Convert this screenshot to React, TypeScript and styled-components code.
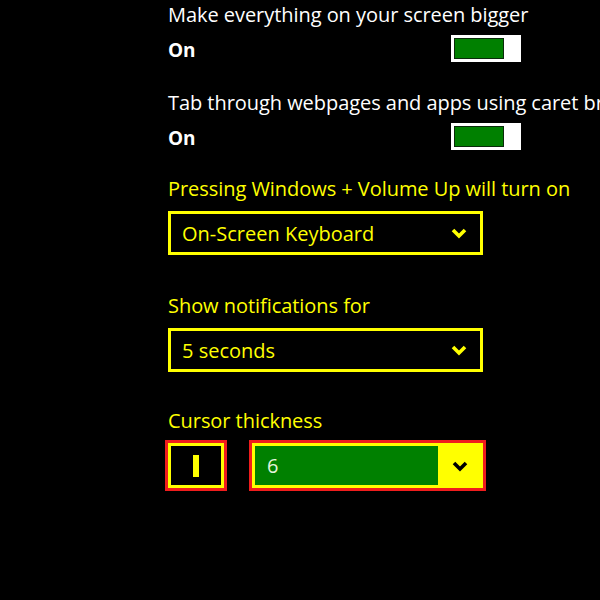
import { createGlobalStyle, styled } from "styled-components";

const GlobalStyle = createGlobalStyle`
    html, body {
        margin: 0;
        padding: 0;
        background: #000;
        overflow: hidden;
    }
    body {
        width: 600px;
        height: 600px;
        font-family: "Open Sans", "Noto Sans", sans-serif;
    }
`;

const Page = styled.div`
    width: 600px;
    height: 600px;
    background: #000;
    overflow: hidden;
`;

const Column = styled.div`
    display: flex;
    flex-direction: column;
    margin-left: 168px;
    width: 353px;
`;

const Section = styled.div<{ $gap: number }>`
    display: flex;
    flex-direction: column;
    margin-top: ${props => props.$gap}px;
`;

const Label = styled.div<{ $color: string; $after: number }>`
    font-size: 20px;
    line-height: 30px;
    height: 30px;
    letter-spacing: -0.05px;
    color: ${props => props.$color};
    white-space: nowrap;
    margin-bottom: ${props => props.$after}px;
`;

const ToggleRow = styled.div`
    display: flex;
    justify-content: space-between;
    align-items: center;
    height: 27px;
    width: 353px;
`;

const StateText = styled.span`
    color: #fff;
    font-weight: 700;
    font-size: 19px;
    line-height: 27px;
    margin-top: 4px;
`;

const ToggleTrack = styled.div`
    width: 70px;
    height: 27px;
    background: #fff;
    padding: 3px;
    box-sizing: border-box;
`;

const ToggleFill = styled.div`
    width: 50px;
    height: 21px;
    background: #008000;
    border: 1px solid #0a2a0a;
    box-sizing: border-box;
`;

const Select = styled.div`
    display: flex;
    align-items: center;
    justify-content: space-between;
    width: 315px;
    height: 44px;
    box-sizing: border-box;
    border: 3px solid #ffff00;
    padding: 0 13px 0 11px;
    color: #ffff00;
    font-size: 20px;
`;

const CursorRow = styled.div`
    display: flex;
    align-items: center;
    gap: 28px;
    margin-top: 3px;
`;

const PreviewBox = styled.div`
    display: flex;
    align-items: center;
    justify-content: center;
    width: 56px;
    height: 45px;
    box-sizing: border-box;
    border: 3px solid #ffff00;
    outline: 3px solid #f01d1d;
    background: #000;
`;

const CursorBar = styled.div<{ $thickness: number }>`
    width: ${props => props.$thickness}px;
    height: 22px;
    background: #ffff00;
`;

const FocusedSelect = styled.div`
    display: flex;
    align-items: stretch;
    width: 231px;
    height: 45px;
    box-sizing: border-box;
    border: 3px solid #ffff00;
    outline: 3px solid #f01d1d;
    background: #ffff00;
`;

const SelectedValue = styled.div`
    display: flex;
    align-items: center;
    width: 183px;
    background: #008000;
    color: #e4f4dc;
    font-size: 20px;
    padding-left: 12px;
    box-sizing: border-box;
`;

const ChevronSlot = styled.div`
    flex: 1;
    display: flex;
    align-items: center;
    justify-content: center;
    padding-left: 2px;
`;

function Chevron({ color }: { color: string }) {
    return (
        <svg width="16" height="12" viewBox="0 0 16 12">
            <polyline points="2,3 8,9 14,3" fill="none" stroke={color} strokeWidth="3.6" strokeLinecap="butt" strokeLinejoin="miter" />
        </svg>
    );
}

function Toggle({ label }: { label: string }) {
    return (
        <>
            <Label $color="#fff" $after={5}>{label}</Label>
            <ToggleRow>
                <StateText>On</StateText>
                <ToggleTrack><ToggleFill /></ToggleTrack>
            </ToggleRow>
        </>
    );
}

export default function App() {
    return (
        <Page>
            <GlobalStyle />
            <Column>
                <Section $gap={0}>
                    <Toggle label="Make everything on your screen bigger" />
                </Section>
                <Section $gap={26}>
                    <Toggle label="Tab through webpages and apps using caret browsing" />
                </Section>
                <Section $gap={24}>
                    <Label $color="#ffff00" $after={7}>Pressing Windows + Volume Up will turn on</Label>
                    <Select>
                        <span>On-Screen Keyboard</span>
                        <Chevron color="#ffff00" />
                    </Select>
                </Section>
                <Section $gap={36}>
                    <Label $color="#ffff00" $after={7}>Show notifications for</Label>
                    <Select>
                        <span>5 seconds</span>
                        <Chevron color="#ffff00" />
                    </Select>
                </Section>
                <Section $gap={34}>
                    <Label $color="#ffff00" $after={4}>Cursor thickness</Label>
                    <CursorRow>
                        <PreviewBox><CursorBar $thickness={6} /></PreviewBox>
                        <FocusedSelect>
                            <SelectedValue>6</SelectedValue>
                            <ChevronSlot><Chevron color="#000" /></ChevronSlot>
                        </FocusedSelect>
                    </CursorRow>
                </Section>
            </Column>
        </Page>
    );
}
